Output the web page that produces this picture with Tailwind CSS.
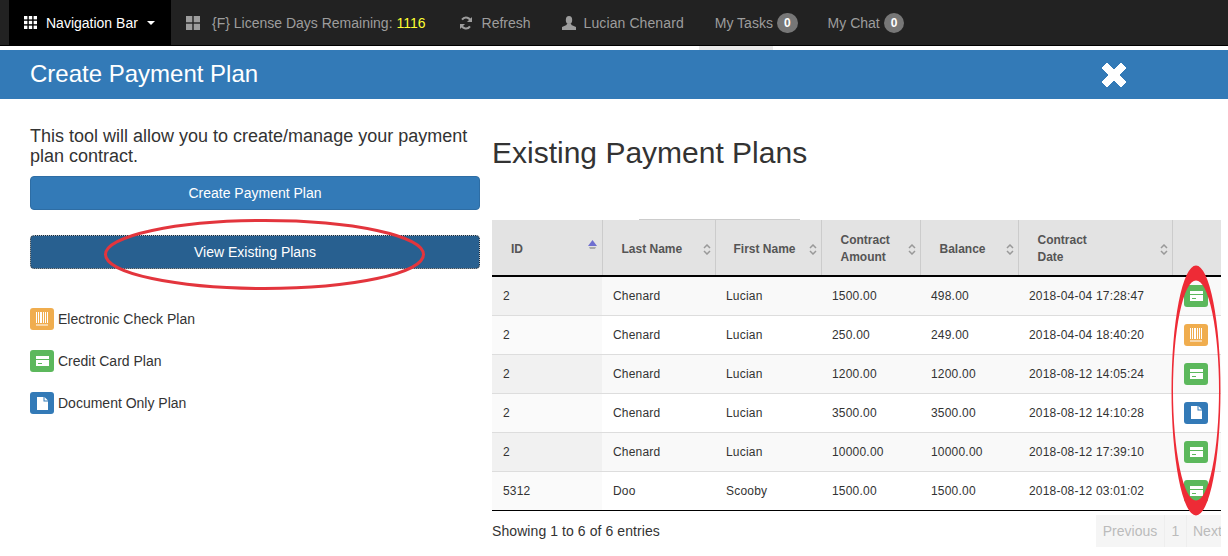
<!DOCTYPE html>
<html lang="en">
<head>
    <meta charset="UTF-8">
    <title>Create Payment Plan</title>
    <script src="https://cdn.jsdelivr.net/npm/@tailwindcss/browser@4"></script>
</head>
<body class="relative w-[1228px] h-[556px] overflow-hidden bg-white text-[#333] text-sm font-['Liberation_Sans',Arial,sans-serif]">
    <!-- Navbar -->
    <nav class="flex h-[46px] pl-[9px] bg-[#222] border-b border-black text-[#9d9d9d] text-sm">
        <a class="flex items-center w-[162px] h-[45px] pl-[15px] bg-black text-white">
            <svg class="w-[13px] h-[13px] mr-[9px]" viewBox="0 0 13 13" fill="#fff"><rect width="3.4" height="3.4"/><rect x="4.8" width="3.4" height="3.4"/><rect x="9.6" width="3.4" height="3.4"/><rect y="4.8" width="3.4" height="3.4"/><rect x="4.8" y="4.8" width="3.4" height="3.4"/><rect x="9.6" y="4.8" width="3.4" height="3.4"/><rect y="9.6" width="3.4" height="3.4"/><rect x="4.8" y="9.6" width="3.4" height="3.4"/><rect x="9.6" y="9.6" width="3.4" height="3.4"/></svg>
            Navigation Bar
            <span class="ml-[9px] border-x-4 border-t-4 border-x-transparent border-t-white"></span>
        </a>
        <a class="flex items-center pl-[15px] pr-[19px]">
            <svg class="w-[14px] h-[14px] mr-[12px]" viewBox="0 0 14 14" fill="#9d9d9d"><rect width="6.3" height="6.3"/><rect x="7.7" width="6.3" height="6.3"/><rect y="7.7" width="6.3" height="6.3"/><rect x="7.7" y="7.7" width="6.3" height="6.3"/></svg>
            {F} License Days Remaining:&nbsp;<span class="text-[#ffff33]">1116</span>
        </a>
        <a class="flex items-center pl-[14px] pr-[16px]">
            <svg class="w-[14px] h-[14px] mr-[9px]" viewBox="0 0 14 14" fill="none" stroke="#9d9d9d" stroke-width="2"><path d="M12 6A5 5 0 0 0 3 3.6"/><path d="M2 8a5 5 0 0 0 9 2.4"/><path d="M13 1v5H8z" fill="#9d9d9d" stroke="none"/><path d="M1 13V8h5z" fill="#9d9d9d" stroke="none"/></svg>
            Refresh
        </a>
        <a class="flex items-center pl-[15px] pr-[16px] tracking-[0.1px]">
            <svg class="w-[14px] h-[14px] mr-[8px]" viewBox="0 0 14 14" fill="#9d9d9d"><ellipse cx="7" cy="4" rx="3.2" ry="4"/><path d="M5 7.500h4l.5 1.500L14 11v3H0v-3l4.500-2z"/></svg>
            Lucian Chenard
        </a>
        <a class="flex items-center pl-[15px] pr-[15px]">
            My Tasks
            <span class="ml-[4px] px-[7px] h-[20px] leading-[20px] rounded-[10px] bg-[#777] text-white text-xs font-bold">0</span>
        </a>
        <a class="flex items-center pl-[15px] pr-[15px]">
            My Chat
            <span class="ml-[4px] px-[7px] h-[20px] leading-[20px] rounded-[10px] bg-[#777] text-white text-xs font-bold">0</span>
        </a>
    </nav>

    <!-- Modal header -->
    <div class="flex items-center justify-between h-[49px] mt-[4px] pl-[30px] pr-[101px] bg-[#337ab7] text-white">
        <h1 class="text-2xl leading-[47px] pb-[2px]">Create Payment Plan</h1>
        <svg class="w-[26px] h-[26px]" viewBox="0 0 26 26" fill="#fff"><path d="M6 1l7 7 7-7 5 5-7 7 7 7-5 5-7-7-7 7-5-5 7-7-7-7z" stroke="#fff" stroke-linejoin="round"/></svg>
    </div>

    <main class="flex pl-[30px]">
        <!-- Left column -->
        <div class="w-[450px] pt-[27px]">
            <p class="text-lg leading-[20px] mb-[10px]">This tool will allow you to create/manage your payment plan contract.</p>
            <button class="block w-full h-[34px] rounded bg-[#337ab7] border border-[#2e6da4] text-white">Create Payment Plan</button>
            <button class="block w-full h-[34px] mt-[25px] rounded bg-[#286090] border border-[#122b40] outline-1 outline-dotted outline-white/70 -outline-offset-1 text-white">View Existing Plans</button>
            <ul class="mt-[38px] space-y-[18px]">
                <li class="flex items-center h-[24px]">
                    <span class="flex items-center justify-center w-[24px] h-[22px] mr-[4px] rounded-[3px] bg-[#f0ad4e]">
                        <svg class="w-[12px] h-[14px]" viewBox="0 0 12 14" fill="#fff"><path d="M0 0h1v11H0zM2 0h1v11H2zM4 0h2v11H4zM7 0h1v11H7zM9 0h1v11H9zM11 0h1v11h-1zM0 12.500h12v1H0z"/></svg>
                    </span>
                    Electronic Check Plan
                </li>
                <li class="flex items-center h-[24px]">
                    <span class="flex items-center justify-center w-[24px] h-[22px] mr-[4px] rounded-[3px] bg-[#5cb85c]">
                        <svg class="w-[13px] h-[10px]" viewBox="0 0 13 10" fill="#fff"><path d="M0 0h13v3H0zM0 4h13v6H0z"/><path d="M2 7h4v1H2z" fill="#5cb85c"/></svg>
                    </span>
                    Credit Card Plan
                </li>
                <li class="flex items-center h-[24px]">
                    <span class="flex items-center justify-center w-[24px] h-[22px] mr-[4px] rounded-[3px] bg-[#337ab7]">
                        <svg class="w-[11px] h-[13px]" viewBox="0 0 11 13" fill="#fff"><path d="M0 0h6.500v4.500H11V13H0zM7.500 0L11 3.500H7.500z"/></svg>
                    </span>
                    Document Only Plan
                </li>
            </ul>
        </div>

        <!-- Right column -->
        <div class="w-[729px] ml-[12px]">
            <h2 class="text-[30px] leading-[33px] mt-[37px] mb-[51px]">Existing Payment Plans</h2>
            <table class="w-[729px] table-fixed border-collapse text-xs">
                <colgroup>
                    <col class="w-[110px]"><col class="w-[113px]"><col class="w-[106px]"><col class="w-[99px]"><col class="w-[98px]"><col class="w-[154px]"><col class="w-[49px]">
                </colgroup>
                <thead class="bg-[#e3e3e3] text-[#555] font-bold">
                    <tr class="h-[56px] border-b-2 border-black">
                        <th class="relative pl-[19px] pt-[2px] text-left border-r border-[#ccc]">ID
                            <svg class="absolute right-[5px] top-[20px] w-[9px] h-[9px]" viewBox="0 0 9 9"><path d="M4.500 0L9 6H0z" fill="#6f6fd0"/><path d="M1 7h7l-1 2H2z" fill="#aaa"/></svg>
                        </th>
                        <th class="relative pl-[19px] pt-[2px] text-left border-r border-[#ccc]">Last Name
                            <svg class="absolute right-[4px] top-[24px] w-[8px] h-[11px]" viewBox="0 0 8 11" fill="none" stroke="#999" stroke-width="1.500"><path d="M1 4l3-3 3 3M1 7l3 3 3-3"/></svg>
                        </th>
                        <th class="relative pl-[18px] pt-[2px] text-left border-r border-[#ccc]">First Name
                            <svg class="absolute right-[4px] top-[24px] w-[8px] h-[11px]" viewBox="0 0 8 11" fill="none" stroke="#999" stroke-width="1.500"><path d="M1 4l3-3 3 3M1 7l3 3 3-3"/></svg>
                        </th>
                        <th class="relative pl-[19px] pt-[2px] text-left leading-[17px] border-r border-[#ccc]">Contract<br>Amount
                            <svg class="absolute right-[4px] top-[24px] w-[8px] h-[11px]" viewBox="0 0 8 11" fill="none" stroke="#999" stroke-width="1.500"><path d="M1 4l3-3 3 3M1 7l3 3 3-3"/></svg>
                        </th>
                        <th class="relative pl-[19px] pt-[2px] text-left border-r border-[#ccc]">Balance
                            <svg class="absolute right-[4px] top-[24px] w-[8px] h-[11px]" viewBox="0 0 8 11" fill="none" stroke="#999" stroke-width="1.500"><path d="M1 4l3-3 3 3M1 7l3 3 3-3"/></svg>
                        </th>
                        <th class="relative pl-[19px] pt-[2px] text-left leading-[17px] border-r border-[#ccc]">Contract<br>Date
                            <svg class="absolute right-[4px] top-[24px] w-[8px] h-[11px]" viewBox="0 0 8 11" fill="none" stroke="#999" stroke-width="1.500"><path d="M1 4l3-3 3 3M1 7l3 3 3-3"/></svg>
                        </th>
                        <th></th>
                    </tr>
                </thead>
                <tbody class="tracking-[0.2px]">
                    <tr class="h-[39px] bg-[#f9f9f9]">
                        <td class="pl-[11px] bg-[#f1f1f1]">2</td><td class="pl-[11px]">Chenard</td><td class="pl-[11px]">Lucian</td><td class="pl-[11px]">1500.00</td><td class="pl-[11px]">498.00</td><td class="pl-[11px]">2018-04-04 17:28:47</td>
                        <td class="pl-[12px]"><span class="flex items-center justify-center w-[24px] h-[22px] rounded-[3px] bg-[#5cb85c]"><svg class="w-[13px] h-[10px]" viewBox="0 0 13 10" fill="#fff"><path d="M0 0h13v3H0zM0 4h13v6H0z"/><path d="M2 7h4v1H2z" fill="#5cb85c"/></svg></span></td>
                    </tr>
                    <tr class="h-[39px] bg-white border-t border-[#ddd]">
                        <td class="pl-[11px] bg-[#fafafa]">2</td><td class="pl-[11px]">Chenard</td><td class="pl-[11px]">Lucian</td><td class="pl-[11px]">250.00</td><td class="pl-[11px]">249.00</td><td class="pl-[11px]">2018-04-04 18:40:20</td>
                        <td class="pl-[12px]"><span class="flex items-center justify-center w-[24px] h-[22px] rounded-[3px] bg-[#f0ad4e]"><svg class="w-[12px] h-[14px]" viewBox="0 0 12 14" fill="#fff"><path d="M0 0h1v11H0zM2 0h1v11H2zM4 0h2v11H4zM7 0h1v11H7zM9 0h1v11H9zM11 0h1v11h-1zM0 12.500h12v1H0z"/></svg></span></td>
                    </tr>
                    <tr class="h-[39px] bg-[#f9f9f9] border-t border-[#ddd]">
                        <td class="pl-[11px] bg-[#f1f1f1]">2</td><td class="pl-[11px]">Chenard</td><td class="pl-[11px]">Lucian</td><td class="pl-[11px]">1200.00</td><td class="pl-[11px]">1200.00</td><td class="pl-[11px]">2018-08-12 14:05:24</td>
                        <td class="pl-[12px]"><span class="flex items-center justify-center w-[24px] h-[22px] rounded-[3px] bg-[#5cb85c]"><svg class="w-[13px] h-[10px]" viewBox="0 0 13 10" fill="#fff"><path d="M0 0h13v3H0zM0 4h13v6H0z"/><path d="M2 7h4v1H2z" fill="#5cb85c"/></svg></span></td>
                    </tr>
                    <tr class="h-[39px] bg-white border-t border-[#ddd]">
                        <td class="pl-[11px] bg-[#fafafa]">2</td><td class="pl-[11px]">Chenard</td><td class="pl-[11px]">Lucian</td><td class="pl-[11px]">3500.00</td><td class="pl-[11px]">3500.00</td><td class="pl-[11px]">2018-08-12 14:10:28</td>
                        <td class="pl-[12px]"><span class="flex items-center justify-center w-[24px] h-[22px] rounded-[3px] bg-[#337ab7]"><svg class="w-[11px] h-[13px]" viewBox="0 0 11 13" fill="#fff"><path d="M0 0h6.500v4.500H11V13H0zM7.500 0L11 3.500H7.500z"/></svg></span></td>
                    </tr>
                    <tr class="h-[39px] bg-[#f9f9f9] border-t border-[#ddd]">
                        <td class="pl-[11px] bg-[#f1f1f1]">2</td><td class="pl-[11px]">Chenard</td><td class="pl-[11px]">Lucian</td><td class="pl-[11px]">10000.00</td><td class="pl-[11px]">10000.00</td><td class="pl-[11px]">2018-08-12 17:39:10</td>
                        <td class="pl-[12px]"><span class="flex items-center justify-center w-[24px] h-[22px] rounded-[3px] bg-[#5cb85c]"><svg class="w-[13px] h-[10px]" viewBox="0 0 13 10" fill="#fff"><path d="M0 0h13v3H0zM0 4h13v6H0z"/><path d="M2 7h4v1H2z" fill="#5cb85c"/></svg></span></td>
                    </tr>
                    <tr class="h-[39px] bg-white border-t border-[#ddd] border-b border-b-black">
                        <td class="pl-[11px] bg-[#fafafa]">5312</td><td class="pl-[11px]">Doo</td><td class="pl-[11px]">Scooby</td><td class="pl-[11px]">1500.00</td><td class="pl-[11px]">1500.00</td><td class="pl-[11px]">2018-08-12 03:01:02</td>
                        <td class="pl-[12px]"><span class="flex items-center justify-center w-[24px] h-[22px] rounded-[3px] bg-[#5cb85c]"><svg class="w-[13px] h-[10px]" viewBox="0 0 13 10" fill="#fff"><path d="M0 0h13v3H0zM0 4h13v6H0z"/><path d="M2 7h4v1H2z" fill="#5cb85c"/></svg></span></td>
                    </tr>
                </tbody>
            </table>
            <div class="flex items-start justify-between w-[729px] overflow-hidden mt-[3px]">
                <span class="pt-[7px] tracking-[0.08px]">Showing 1 to 6 of 6 entries</span>
                <div class="flex h-[32px] mt-px leading-[32px] bg-[#f5f5f5] text-[#bbb]">
                    <span class="w-[69px] text-center border-r border-[#eee]">Previous</span>
                    <span class="w-[22px] text-center border-r border-[#eee]">1</span>
                    <span class="w-[34px] pl-[6px]">Next</span>
                </div>
            </div>
        </div>
    </main>

    <!-- Annotations and stray marks over the page -->
    <div class="absolute left-[699px] top-[46px] w-[74px] h-[4px] bg-[#e8e8e8]"></div>
    <div class="absolute left-[639px] top-[219px] w-[161px] h-px bg-[#ccc]"></div>
    <svg class="absolute left-0 top-0 w-[1228px] h-[556px] pointer-events-none" viewBox="0 0 1228 556" fill="none">
        <ellipse cx="264.500" cy="254.500" rx="159" ry="34" stroke="#e3353d" stroke-width="3"/>
        <path fill="#ee2b36" fill-rule="evenodd" d="M1171.500 390.500a24.500 125 0 1 0 49 0a24.500 125 0 1 0 -49 0zM1173 390.500a23 110 0 1 0 46 0a23 110 0 1 0 -46 0z"/>
    </svg>
</body>
</html>
